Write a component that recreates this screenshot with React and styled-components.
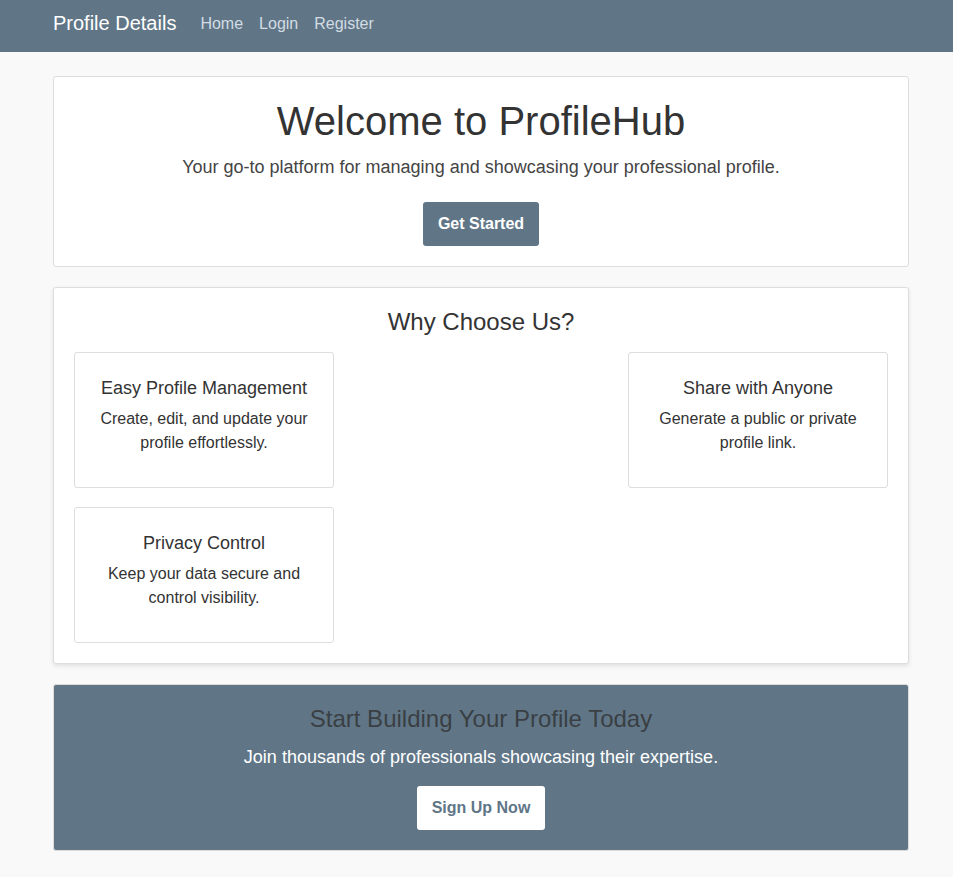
import React from "react";
import styled, { createGlobalStyle } from "styled-components";

const GlobalStyle = createGlobalStyle`
  body {
    margin: 0;
    background-color: #f9f9f9;
    font-family: "Liberation Sans", Arial, sans-serif;
    color: #333;
  }
`;

const Navbar = styled.nav`
  background-color: #607687;
  height: 52px;
  box-sizing: border-box;
  display: flex;
  align-items: center;
  padding: 0 53px 5px;
`;

const Brand = styled.a`
  color: #fff;
  font-size: 20px;
  text-decoration: none;
  margin-right: 24px;
`;

const NavLinks = styled.div`
  display: flex;
  gap: 16px;
`;

const NavLink = styled.a`
  color: #d3dce3;
  font-size: 16px;
  text-decoration: none;
`;

const Main = styled.main`
  width: 856px;
  margin: 24px 0 0 53px;
  display: flex;
  flex-direction: column;
  gap: 20px;
`;

const Card = styled.section`
  background-color: ${(props) => (props.dark ? "#607687" : "#fff")};
  border: 1px solid ${(props) => (props.dark ? "#dcdcdc" : "#ddd")};
  border-radius: 3px;
  padding: 20px;
  text-align: center;
  box-shadow: ${(props) =>
    props.raised ? "0 2px 4px rgba(0, 0, 0, 0.1)" : "none"};
`;

const HeroTitle = styled.h1`
  margin: 0;
  font-size: 40px;
  line-height: 48px;
  font-weight: 400;
  color: #333;
`;

const Lead = styled.p`
  margin: ${(props) => (props.light ? "13px 0 18px" : "11px 0 24px")};
  font-size: 18px;
  line-height: 22px;
  color: ${(props) => (props.light ? "#fff" : "#444")};
`;

const Button = styled.button`
  font-family: inherit;
  font-size: 16px;
  font-weight: 700;
  line-height: 20px;
  height: 44px;
  padding: 0 15px;
  border: none;
  border-radius: 3px;
  cursor: pointer;
  background-color: ${(props) => (props.inverted ? "#fff" : "#607687")};
  color: ${(props) => (props.inverted ? "#607687" : "#fff")};
`;

const SectionTitle = styled.h2`
  margin: 0 0 16px;
  font-size: 24px;
  line-height: 28px;
  font-weight: 400;
  color: #333;
`;

const FeatureGrid = styled.div`
  display: grid;
  grid-template-columns: repeat(3, 260px);
  justify-content: space-between;
  row-gap: 19px;
`;

const Feature = styled.div`
  grid-column: ${(props) => props.col};
  border: 1px solid #ddd;
  border-radius: 3px;
  height: 136px;
  box-sizing: border-box;
  padding: 24px 20px 0;
`;

const FeatureTitle = styled.h3`
  margin: 0 0 8px;
  font-size: 18px;
  line-height: 22px;
  font-weight: 400;
  color: #333;
`;

const FeatureText = styled.p`
  margin: 0;
  font-size: 16px;
  line-height: 24px;
  color: #333;
`;

const CtaTitle = styled.h2`
  margin: 0;
  font-size: 24px;
  line-height: 28px;
  font-weight: 400;
  color: #3a3f44;
`;

const features = [
  {
    title: "Easy Profile Management",
    text: "Create, edit, and update your profile effortlessly.",
    col: 1,
  },
  {
    title: "Share with Anyone",
    text: "Generate a public or private profile link.",
    col: 3,
  },
  {
    title: "Privacy Control",
    text: "Keep your data secure and control visibility.",
    col: 1,
  },
];

export default function App() {
  return (
    <>
      <GlobalStyle />
      <Navbar>
        <Brand href="#">Profile Details</Brand>
        <NavLinks>
          <NavLink href="#">Home</NavLink>
          <NavLink href="#">Login</NavLink>
          <NavLink href="#">Register</NavLink>
        </NavLinks>
      </Navbar>

      <Main>
        <Card>
          <HeroTitle>Welcome to ProfileHub</HeroTitle>
          <Lead>
            Your go-to platform for managing and showcasing your professional
            profile.
          </Lead>
          <Button>Get Started</Button>
        </Card>

        <Card raised>
          <SectionTitle>Why Choose Us?</SectionTitle>
          <FeatureGrid>
            {features.map((f) => (
              <Feature key={f.title} col={f.col}>
                <FeatureTitle>{f.title}</FeatureTitle>
                <FeatureText>{f.text}</FeatureText>
              </Feature>
            ))}
          </FeatureGrid>
        </Card>

        <Card dark>
          <CtaTitle>Start Building Your Profile Today</CtaTitle>
          <Lead light>
            Join thousands of professionals showcasing their expertise.
          </Lead>
          <Button inverted>Sign Up Now</Button>
        </Card>
      </Main>
    </>
  );
}
